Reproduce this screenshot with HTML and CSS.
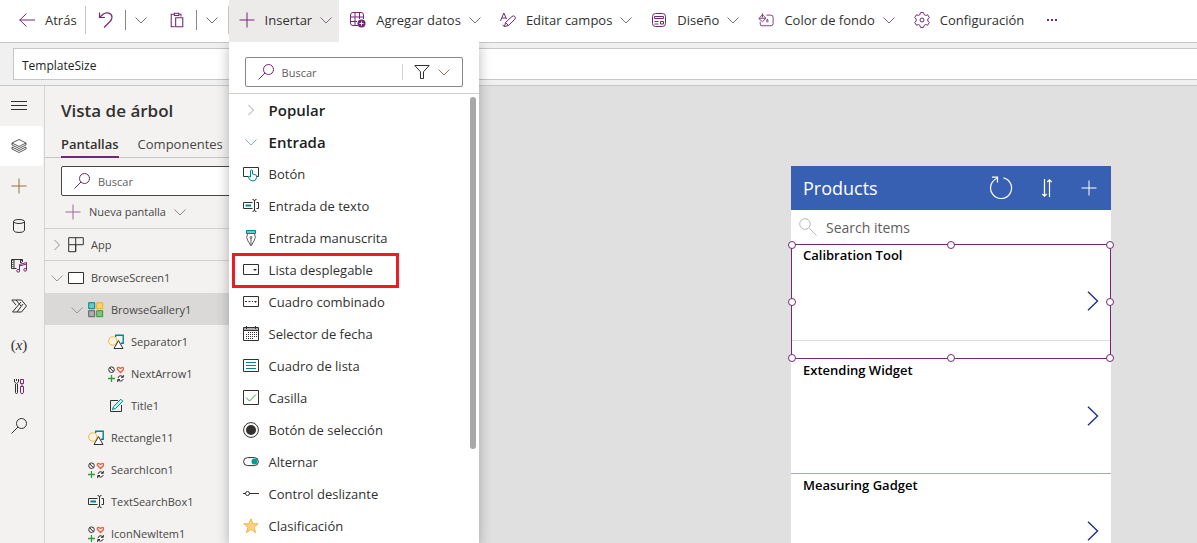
FILE: index.html
```html
<!DOCTYPE html>
<html lang="es">
<head>
<meta charset="utf-8">
<title>Vista de árbol</title>
<link rel="stylesheet" href="styles.css">
</head>
<body>
<svg class="sprite" aria-hidden="true">
  <symbol id="chev" viewBox="0 0 12 12"><path d="M.5 3.500 6 9l5.500-5.500"/></symbol>
  <symbol id="chevr" viewBox="0 0 12 12"><path d="M3.500 1 8.500 6l-5 5"/></symbol>
  <symbol id="back" viewBox="0 0 16 16"><path d="M.5 8H16M7.500 1.500.8 8l6.700 6.500"/></symbol>
  <symbol id="undo" viewBox="0 0 16 16"><path stroke-width="1.200" d="M1.500.5V5.500H7M1.500 5.500 5 2.300C8.500-.4 14 .8 14 5.200c0 2-.8 3.200-2 4.300L6 15.500"/></symbol>
  <symbol id="paste" viewBox="0 0 16 18"><path stroke-width="1.200" d="M5.500 16.500H1.500V2.500H5M10 2.500h2.500V5M5 1.500h5v2.500H5zM6.500 6.500h8v10h-8z"/></symbol>
  <symbol id="plus" viewBox="0 0 16 16"><path d="M8 .5v15M.5 8h15"/></symbol>
  <symbol id="search" viewBox="0 0 16 16"><circle cx="10.500" cy="5.500" r="5"/><path d="M7 9 .5 15.500"/></symbol>
  <symbol id="grid" viewBox="0 0 16 16"><path d="M8 13.500H3Q.5 13.500.5 11V3Q.5.500 3 .5h8q2.500 0 2.500 2.500v4M5 .5v13M9.500.5V7M.5 5h13M.5 9.500H7"/><circle class="solid" cx="11.500" cy="11.500" r="4"/><path class="inv" d="M11.500 9.500v4M9.500 11.500h4"/></symbol>
  <symbol id="edit" viewBox="0 0 16 16"><path d="M.5 9 3.800 1 6.500 7M2 6h4M4.500 14.500l1-4 6.500-6q1.500-1.300 2.800 0t0 2.800L8.500 13.500 4.500 14.500M5.500 10.500l3 3M4.500 14.500 2.500 13"/></symbol>
  <symbol id="layout" viewBox="0 0 16 16"><rect x="1.500" y="1.500" width="13" height="13" rx="3"/><path d="M3.500 4.500h9v2h-9zM3.500 9.500h4M3.500 12h4M9.500 9.500h3v2.500h-3z"/></symbol>
  <symbol id="fill" viewBox="0 0 18 16"><path d="M2.500 10v2.500q0 2 2 2h10q2.500 0 2.500-2.500V5q0-2.500-2.500-2.500H9.500M1 6.500 5 2l4 4-4 4zM5 .5V5M1.500 6h7M10.500 7q2 3 0 3.500-1.500-.5 0-3.500"/></symbol>
  <symbol id="gear" viewBox="0 0 16 16"><path d="m6.500.6-.6 2-1.400.8-2.100-.6L.7 5.500 2.200 7v2L.7 10.500l1.700 2.700 2.100-.6 1.400.8.6 2h3l.6-2 1.400-.8 2.100.6 1.700-2.700L13.800 9V7l1.500-1.500-1.700-2.700-2.100.6-1.400-.8-.6-2z"/><circle cx="8" cy="8" r="2"/></symbol>
  <symbol id="funnel" viewBox="0 0 16 16"><path d="M.8 1.500h14.400L9.500 7.800v6.700h-3V7.800z"/></symbol>
  <symbol id="burger" viewBox="0 0 16 16"><path d="M0 3.500h16M0 7.500h16M0 11.500h16"/></symbol>
  <symbol id="layers" viewBox="0 0 16 16"><path stroke-width=".8" d="M8 1.500 15 5 8 8.500 1 5zM1 7l7 3.500L15 7M1 9l7 3.500L15 9M1 11l7 3.500 7-3.500M1 5v2M15 5v2M1 9v2M15 9v2"/></symbol>
  <symbol id="db" viewBox="0 0 16 16"><ellipse cx="8" cy="3.500" rx="5.500" ry="2"/><path d="M2.500 3.500v9q1 2 5.500 2t5.500-2v-9"/></symbol>
  <symbol id="media" viewBox="0 0 16 16"><path d="M5.500 10.500H.5v-9h11V4M3 1.500v9M9.500 1.500V5"/><path class="dots" d="M1.800 2v8M10.300 2v3"/><path class="violet" d="M8.500 12.500V6.500l7-2v7M8.500 8l7-2"/><circle class="violet" cx="7.200" cy="12.800" r="1.400"/><circle class="violet" cx="14.200" cy="11.800" r="1.400"/></symbol>
  <symbol id="flow" viewBox="0 0 16 16"><path d="M.8 2h9.700L15.500 8l-5 6H1.500M.8 2 5 7M5 2l5 6M7.500 2M1.500 14 10 4M6 14l6-8"/></symbol>
  <symbol id="tools" viewBox="0 0 16 16"><path d="M4.500 6v8.500q0 1 1 1t1-1V6M3.500 1v3l2 1.500 2-1.500V1M5.500 1v2"/><path class="violet" d="M9.500 1.500h3v4h-3zM11 5.500v3M9.500 8.500h3v6q0 1-1.500 1t-1.500-1z"/></symbol>
  <symbol id="app" viewBox="0 0 16 16"><path d="M.7.7h14.600v7H.7zM.7 7.700v7h7V.7M7.700 14.700v-7"/></symbol>
  <symbol id="screen" viewBox="0 0 16 16"><path class="paper" d="M.5 2.500h15v11H.5z"/></symbol>
  <symbol id="gallery" viewBox="0 0 16 16"><path fill="#69c9c6" stroke="#038387" d="M.7.7h6v6h-6z"/><path fill="#ffd17f" stroke="#f9a928" d="M8.700.7h6v6h-6z"/><path fill="#b0afae" stroke="#605e5c" d="M.7 8.700h6v6h-6z"/><path fill="#83c085" stroke="#359b3c" d="M8.700 8.700h6v6h-6z"/></symbol>
  <symbol id="shape" viewBox="0 0 16 16"><path stroke="#038387" stroke-width="1.400" d="M7.700 3V1.200h7.500v8H13"/><circle cx="4.800" cy="7" r="4.200" fill="#fff5e0" stroke="#f9b13c"/><path class="paper" d="m10.500 6.500 4.500 8H6z"/></symbol>
  <symbol id="icons" viewBox="0 0 16 16"><circle cx="3.500" cy="3.700" r="2.800"/><path d="m1.700 1.700 3.700 4"/><path stroke="#f05a3c" stroke-width="1.300" d="M12.500 6.500 9.500 3.500q-.5-2 1.300-2.200L12.500 2.500l1.700-1.200q1.800.2 1.300 2.200z"/><path stroke="#359b3c" stroke-width="1.300" d="M3.500 9v7M0 12.500h7"/><path d="M10 12q.5-2.500 3-2.300L15 11M15.300 9v2.300H13M15.300 13q-.8 2.200-3 2.200L10 14M9.700 16v-2.500H12"/></symbol>
  <symbol id="pencil" viewBox="0 0 16 16"><path d="M10 2.500H2.500v11h11V7"/><path stroke="#038387" fill="#c9eeec" d="m4.500 11.500 1-3L12.800 1.200l2 2L7.500 10.500z"/></symbol>
  <symbol id="textbox" viewBox="0 0 16 16"><path d="M9.500 4.500h-9v6h9M13.500 4.500h2v6h-2M9.500 1.500q2 0 2 1.500v9q0 1.500-2 1.500M13.500 1.500q-2 0-2 1.500M11.500 12q0 1.500 2 1.500"/><path stroke="#038387" stroke-width="2" d="M2.500 7.500H8"/></symbol>
  <symbol id="button" viewBox="0 0 16 16"><path d="M5 10.500H.5v-9h15v9H13"/><path fill="#fff" stroke="#038387" d="M7.500 11V4.500q1-1 2 0V8l3.500 1q1 .5.500 2.500-.3 3.500-3.500 3.500T5 11q.5-1.200 2.500 0z"/></symbol>
  <symbol id="pen" viewBox="0 0 16 16"><path fill="#69c9c6" stroke="#038387" d="M3.500.5h9v3h-9z"/><path stroke="#605e5c" d="M4.500 4Q2.500 7 5 11l3 5 3-5q2.500-4 .5-7M8 15V8"/><circle cx="8" cy="7.500" r="1" stroke="#605e5c"/></symbol>
  <symbol id="drop" viewBox="0 0 16 16"><path d="M.5 2.500h15v10H.5z"/><path class="ink" d="M10 7h4l-2 2z"/></symbol>
  <symbol id="combo" viewBox="0 0 16 16"><path d="M.5 2.500h15v10H.5zM2 7.500h2M5.500 7.500h2M9 7.500h1"/><path class="ink" d="M11 7h3l-1.500 2z"/></symbol>
  <symbol id="date" viewBox="0 0 16 16"><path fill="#b0afae" stroke="none" d="M1 2h14v3H1z"/><path d="M.5 1.500h15v13H.5zM.5 4.500h15M3.500 0v3M12.500 0v3"/><path stroke-dasharray="1 1" d="M5 6.500h9M3 8.500h11M3 10.500h11M3 12.500h8"/></symbol>
  <symbol id="list" viewBox="0 0 16 16"><path d="M.5 1.500h15v12H.5z"/><path stroke="#038387" d="M3 4.500h10M3 7.500h10M3 10.500h10"/></symbol>
  <symbol id="check" viewBox="0 0 16 16"><path d="M.5.500h15v14H.5z"/><path stroke="#359b3c" d="m3 7.500 3.500 3.500 6.500-6.500"/></symbol>
  <symbol id="radio" viewBox="0 0 16 16"><circle cx="8" cy="8" r="7.400"/><circle class="ink" cx="8" cy="8" r="5"/></symbol>
  <symbol id="toggle" viewBox="0 0 16 16"><rect x=".6" y="3.600" width="14.800" height="8" rx="4"/><circle cx="11.500" cy="7.600" r="3" fill="#009e92" stroke="none"/></symbol>
  <symbol id="slider" viewBox="0 0 16 16"><circle cx="4.500" cy="7.500" r="2"/><path d="M0 7.500h2.500M6.500 7.500H16"/></symbol>
  <symbol id="star" viewBox="0 0 16 16"><path fill="#ffd17f" stroke="#f0b552" d="m8 .8 1.900 5h5.300l-4.200 3.400 1.700 5.600L8 11.500l-4.700 3.300L5 9.200.8 5.800h5.300z"/></symbol>
  <symbol id="reload" viewBox="0 0 24 24"><path stroke-width="1.200" d="M14.500 1.800A10.500 10.500 0 1 1 8.300 2.200M3 1.200h5.500v5.300"/></symbol>
  <symbol id="sort" viewBox="0 0 12 20"><path stroke-width="1.200" d="M3.500 1v17M1.300 16l2.200 2.200L5.700 16M8.500 19V2M6.300 4l2.200-2.200L10.700 4"/></symbol>
  <symbol id="lens" viewBox="0 0 18 18"><circle cx="6" cy="6" r="5.300"/><path d="m10 10 7.500 7.500"/></symbol>
  <symbol id="next" viewBox="0 0 12 20"><path d="m1 .8 9.500 9.200L1 19.200"/></symbol>
</svg>

<div class="studio">
  <header class="toolbar">
    <button class="tool"><svg class="i"><use href="#back"/></svg><span>Atrás</span></button>
    <span class="rule tall"></span>
    <button class="tool compact" aria-label="Deshacer"><svg class="i"><use href="#undo"/></svg></button>
    <span class="rule"></span>
    <button class="tool arrow" aria-label="Más opciones de deshacer"><svg class="c"><use href="#chev"/></svg></button>
    <button class="tool compact paste" aria-label="Pegar"><svg class="i"><use href="#paste"/></svg></button>
    <span class="rule"></span>
    <button class="tool arrow" aria-label="Más opciones de pegar"><svg class="c"><use href="#chev"/></svg></button>
    <span class="rule tall"></span>
    <div class="insert">
      <button class="tool open" aria-expanded="true"><svg class="i"><use href="#plus"/></svg><span>Insertar</span><svg class="c"><use href="#chev"/></svg></button>
      <div class="menu">
        <div class="menu-search">
          <label class="search"><svg class="i violet-icon"><use href="#search"/></svg><input type="search" placeholder="Buscar" aria-label="Buscar controles"></label>
          <button class="filter" aria-label="Filtrar"><svg class="i"><use href="#funnel"/></svg><svg class="c"><use href="#chev"/></svg></button>
        </div>
        <div class="menu-body">
          <div class="menu-list">
            <button class="entry group"><svg class="c"><use href="#chevr"/></svg>Popular</button>
            <button class="entry group on"><svg class="c"><use href="#chev"/></svg>Entrada</button>
            <button class="entry"><svg class="i"><use href="#button"/></svg>Botón</button>
            <button class="entry"><svg class="i"><use href="#textbox"/></svg>Entrada de texto</button>
            <button class="entry"><svg class="i"><use href="#pen"/></svg>Entrada manuscrita</button>
            <button class="entry marked"><svg class="i"><use href="#drop"/></svg>Lista desplegable</button>
            <button class="entry"><svg class="i"><use href="#combo"/></svg>Cuadro combinado</button>
            <button class="entry"><svg class="i"><use href="#date"/></svg>Selector de fecha</button>
            <button class="entry"><svg class="i"><use href="#list"/></svg>Cuadro de lista</button>
            <button class="entry"><svg class="i"><use href="#check"/></svg>Casilla</button>
            <button class="entry"><svg class="i"><use href="#radio"/></svg>Botón de selección</button>
            <button class="entry"><svg class="i"><use href="#toggle"/></svg>Alternar</button>
            <button class="entry"><svg class="i"><use href="#slider"/></svg>Control deslizante</button>
            <button class="entry"><svg class="i"><use href="#star"/></svg>Clasificación</button>
          </div>
          <div class="track"><div class="thumb"></div></div>
        </div>
      </div>
    </div>
    <button class="tool wide"><svg class="i"><use href="#grid"/></svg><span>Agregar datos</span><svg class="c"><use href="#chev"/></svg></button>
    <button class="tool wide"><svg class="i"><use href="#edit"/></svg><span>Editar campos</span><svg class="c"><use href="#chev"/></svg></button>
    <button class="tool wide"><svg class="i"><use href="#layout"/></svg><span>Diseño</span><svg class="c"><use href="#chev"/></svg></button>
    <button class="tool wide"><svg class="i"><use href="#fill"/></svg><span>Color de fondo</span><svg class="c"><use href="#chev"/></svg></button>
    <button class="tool wide"><svg class="i"><use href="#gear"/></svg><span>Configuración</span></button>
    <button class="tool more" aria-label="Más"><i></i><i></i><i></i></button>
  </header>

  <div class="formula">
    <input class="property" value="TemplateSize" aria-label="Propiedad">
    <input class="expression" aria-label="Fórmula">
  </div>

  <div class="work">
    <nav class="rail">
      <button aria-label="Menú"><svg class="i"><use href="#burger"/></svg></button>
      <button class="current" aria-label="Vista de árbol"><svg class="i"><use href="#layers"/></svg></button>
      <button class="add" aria-label="Insertar"><svg class="i"><use href="#plus"/></svg></button>
      <button aria-label="Datos"><svg class="i"><use href="#db"/></svg></button>
      <button aria-label="Multimedia"><svg class="i"><use href="#media"/></svg></button>
      <button aria-label="Flujos"><svg class="i"><use href="#flow"/></svg></button>
      <button class="vars">(<i>x</i>)</button>
      <button aria-label="Herramientas"><svg class="i"><use href="#tools"/></svg></button>
      <button aria-label="Buscar"><svg class="i"><use href="#search"/></svg></button>
    </nav>

    <aside class="tree">
      <h1>Vista de árbol</h1>
      <div class="tabs"><button class="tab active">Pantallas</button><button class="tab">Componentes</button></div>
      <label class="search tree-search"><svg class="i violet-icon"><use href="#search"/></svg><input type="search" placeholder="Buscar" aria-label="Buscar en el árbol"></label>
      <button class="new"><svg class="i"><use href="#plus"/></svg>Nueva pantalla<svg class="c"><use href="#chev"/></svg></button>
      <ul class="nodes">
        <li class="node top"><svg class="c"><use href="#chevr"/></svg><svg class="i"><use href="#app"/></svg>App</li>
        <li class="node"><svg class="c"><use href="#chev"/></svg><svg class="i"><use href="#screen"/></svg>BrowseScreen1</li>
        <li class="node l1 selected"><svg class="c"><use href="#chev"/></svg><svg class="i"><use href="#gallery"/></svg>BrowseGallery1</li>
        <li class="node l3"><svg class="i"><use href="#shape"/></svg>Separator1</li>
        <li class="node l3"><svg class="i"><use href="#icons"/></svg>NextArrow1</li>
        <li class="node l3"><svg class="i"><use href="#pencil"/></svg>Title1</li>
        <li class="node l2"><svg class="i"><use href="#shape"/></svg>Rectangle11</li>
        <li class="node l2"><svg class="i"><use href="#icons"/></svg>SearchIcon1</li>
        <li class="node l2"><svg class="i"><use href="#textbox"/></svg>TextSearchBox1</li>
        <li class="node l2"><svg class="i"><use href="#icons"/></svg>IconNewItem1</li>
      </ul>
    </aside>

    <main class="canvas">
      <section class="phone">
        <div class="phone-head">
          <h2>Products</h2>
          <svg class="reload"><use href="#reload"/></svg>
          <svg class="sort"><use href="#sort"/></svg>
          <svg class="i"><use href="#plus"/></svg>
        </div>
        <label class="phone-search"><svg><use href="#lens"/></svg><input type="search" placeholder="Search items" aria-label="Search items"></label>
        <article class="card picked">
          <h3>Calibration Tool</h3><svg class="next"><use href="#next"/></svg>
          <div class="frame"><b></b><b></b><b></b><b></b><b></b><b></b><b></b><b></b></div>
        </article>
        <article class="card"><h3>Extending Widget</h3><svg class="next"><use href="#next"/></svg></article>
        <article class="card"><h3>Measuring Gadget</h3><svg class="next"><use href="#next"/></svg></article>
      </section>
    </main>
  </div>
</div>
</body>
</html>
```
FILE: styles.css
```css
*, *::before, *::after { box-sizing: border-box; }
body { margin: 0; font: 13px/20px "Open Sans", "Noto Sans", sans-serif; color: #323130; }
button, input { font: inherit; color: inherit; border: 0; padding: 0; margin: 0; background: none; outline: 0; min-width: 0; border-radius: 0; }
button { white-space: nowrap; }
h1, h2, h3, ul { margin: 0; padding: 0; list-style: none; }
svg { fill: none; stroke: currentColor; flex: none; display: block; }
.sprite { position: absolute; width: 0; height: 0; }
.i { width: 16px; height: 16px; }
.c { width: 12px; height: 12px; }
.solid { fill: #742774; stroke: none; }
.inv { stroke: #fff; }
.ink { fill: #323130; stroke: none; }
.paper { fill: #fff; }
.violet { stroke: #742774; }
.dots { stroke-dasharray: 1 1; }
.violet-icon { color: #742774; }

.studio { height: 100vh; display: flex; flex-direction: column; overflow: hidden; }

/* command bar */
.toolbar { display: flex; align-items: center; height: 43px; flex: none; padding-left: 9px; background: #fff; border-bottom: 1px solid #c8c6c4; }
.tool { display: flex; align-items: center; gap: 10px; height: 42px; padding: 0 8px 2px 10px; }
.tool .i { color: #742774; }
.tool .c { color: #7d6a7d; margin-left: -2px; }
.wide { padding-left: 11px; }
.compact { padding: 0 11px 2px 12px; }
.paste { padding: 0 11px 2px 22px; }
.arrow { padding: 0 0 2px 11px; }
.arrow + .tall { margin-left: 10px; }
.rule { width: 1px; height: 20px; background: #8a8886; margin-bottom: 2px; }
.tall { height: 28px; background: #c8c6c4; }
.insert { position: relative; z-index: 5; }
.open { background: #edebe9; padding-right: 7px; }
.more { gap: 2px; padding-left: 15px; }
.more i { width: 2px; height: 2px; background: #742774; }

/* insert menu */
.menu { position: absolute; top: 42px; left: 0; width: 250px; height: calc(100vh - 42px); background: #fff; box-shadow: 0 3px 12px rgba(0, 0, 0, .28); display: flex; flex-direction: column; clip-path: inset(0 -20px); }
.menu-search { display: flex; height: 30px; margin: 15px 16px 6px; border: 1px solid #8a8886; border-radius: 2px; flex: none; align-items: center; }
.search { display: flex; align-items: center; gap: 8px; flex: 1; min-width: 0; padding-left: 12px; font-size: 11px; }
.search input { flex: 1; width: 0; padding-top: 1px; }
input::placeholder { color: #605e5c; opacity: 1; }
.filter { display: flex; align-items: center; gap: 8px; padding: 0 12px 0 11px; border-left: 1px solid #d2d0ce; }
.filter .c { color: #a0705a; }
.menu-body { border-top: 1px solid #d2d0ce; display: flex; flex: 1; min-height: 0; }
.menu-list { flex: 1; overflow: hidden; padding-left: 3px; }
.entry { position: relative; display: flex; align-items: center; gap: 10px; width: 100%; height: 32px; padding-left: 11px; }
.group { font-size: 15px; font-weight: 600; gap: 12px; padding-left: 13px; color: #201f1e; }
.group .c { color: #a19f9d; }
.group.on .c { color: #7fb0c8; }
.marked::after { content: ""; position: absolute; inset: -1px auto -2px 0; width: 167px; border: 3px solid #ed1c24; }
.track { width: 9px; padding-top: 3px; }
.thumb { width: 6px; height: 352px; border-radius: 3px; background: #a8a8a8; }

/* formula row */
.formula { display: flex; flex: none; height: 43px; padding: 5px 0 5px 13px; background: #f0f0f0; border-bottom: 1px solid #c8c8c8; }
.formula input { height: 32px; background: #fff; border: 1px solid #c8c6c4; padding: 2px 8px 0; font-size: 12px; color: #201f1e; }
.property { width: 230px; }
.formula .expression { flex: 1; border-right: 0; margin-left: 8px; }

.work { display: flex; flex: 1; min-height: 0; }

/* side rail */
.rail { width: 45px; flex: none; background: #f3f2f1; border-right: 1px solid #d6d4d2; }
.rail button { display: flex; align-items: center; justify-content: center; width: 43px; height: 40px; padding-right: 5px; }
.rail .current { background: #fff; border-radius: 0 2px 2px 0; }
.rail .add { color: #94713f; }
.rail .vars { font: 15px/20px "Liberation Serif", serif; padding-bottom: 2px; }

/* tree view */
.tree { width: 250px; flex: none; background: #f3f2f1; }
.tree h1 { font-size: 17px; line-height: 24px; font-weight: 600; padding: 13px 16px 9px; }
.tabs { display: flex; gap: 19px; height: 26px; padding-left: 16px; border-bottom: 1px solid #c8c6c4; }
.tab { height: 26px; color: #484644; border-bottom: 2px solid transparent; }
.active { font-weight: 600; border-color: #742774; color: #323130; }
.tree-search { height: 30px; margin: 8px 16px 0; background: #fff; border: 1px solid #484644; border-radius: 2px; }
.new { display: flex; align-items: center; gap: 8px; height: 32px; padding-left: 20px; font-size: 11px; color: #484644; }
.new .i { color: #9b6b9b; }
.new .c { color: #8a8886; }
.node { display: flex; align-items: center; gap: 7px; height: 32px; padding: 1px 0 0 6px; font-size: 11px; white-space: nowrap; color: #484644; }
.node .c { color: #979593; margin-right: -2px; }
.node .i { color: #323130; }
.top { border-top: 1px solid #d2d0ce; border-bottom: 1px solid #d2d0ce; height: 33px; }
.l1 { padding-left: 26px; }
.l2 { padding-left: 43px; }
.l3 { padding-left: 63px; }
.selected { background: #dad9d8; }

/* app preview */
.canvas { flex: 1; min-width: 0; display: flex; justify-content: flex-end; padding: 80px 86px 0 0; background: #e0e0e0; }
.phone { width: 320px; height: 568px; flex: none; background: #fff; color: #000; }
.phone-head { display: flex; align-items: center; gap: 28px; height: 44px; padding: 0 14px 0 12px; background: #3860b2; color: #fff; }
.phone h2 { flex: 1; font-size: 18px; font-weight: 400; }
.reload { width: 24px; height: 24px; }
.sort { width: 12px; height: 20px; }
.phone-search { display: flex; align-items: center; gap: 9px; height: 34px; padding-left: 8px; font-size: 14px; }
.phone-search input { padding-top: 2px; }
.phone-search svg { width: 18px; height: 18px; color: #b8b8b8; }
.card { position: relative; display: flex; justify-content: space-between; height: 115px; padding: 1px 12px 0; border-bottom: 1px solid #a3a5cc; }
.card h3 { font-size: 13px; font-weight: 600; }
.next { width: 12px; height: 20px; margin-top: 46px; color: #1f2f86; stroke-width: 1.4; }
.picked { border-bottom-color: transparent; background: linear-gradient(#dddbe8, #dddbe8) 0 96px / 100% 1px no-repeat; }

/* selection frame with eight handles centred on its border */
.frame { position: absolute; inset: 0 0 -1px; border: 1px solid #742774; display: grid; grid-template-columns: repeat(3, 8px); grid-template-rows: repeat(3, 8px); justify-content: space-between; align-content: space-between; }
.frame b { width: 8px; height: 8px; border: 1px solid #742774; border-radius: 50%; background: #fff; }
.frame b:nth-child(5) { grid-column: 3; }
.frame b:nth-child(-n+3) { margin-top: -4px; }
.frame b:nth-child(n+6) { margin-top: 4px; }
.frame b:nth-child(1), .frame b:nth-child(4), .frame b:nth-child(6) { margin-left: -4px; }
.frame b:nth-child(3), .frame b:nth-child(5), .frame b:nth-child(8) { margin-left: 4px; }
```
